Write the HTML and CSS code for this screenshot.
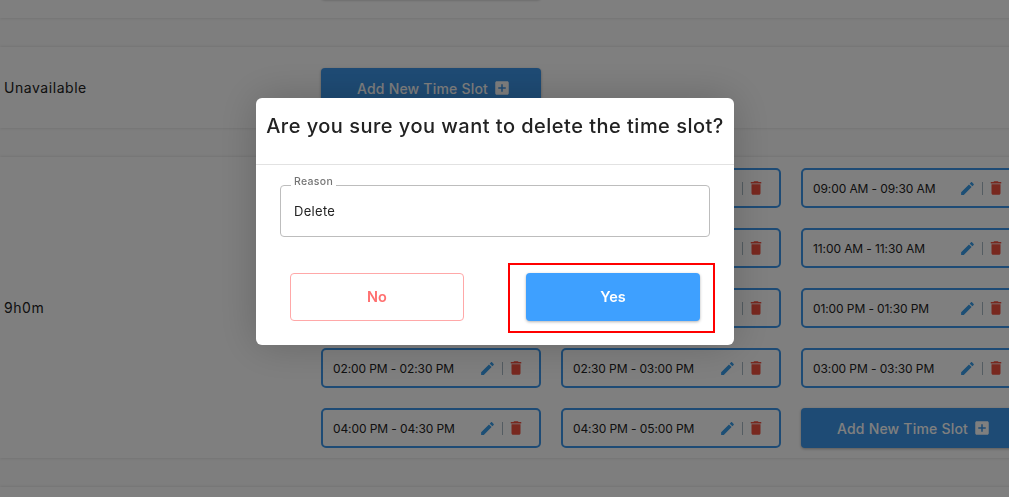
FILE: index.html
```html
<!DOCTYPE html>
<html lang="en">
<head>
  <meta charset="UTF-8" />
  <meta name="viewport" content="width=device-width, initial-scale=1.0"/>
  <title>Time Slots</title>
  <link rel="stylesheet" href="styles.css">
</head>
<body>

  <svg class="sprite" aria-hidden="true">
    <symbol id="icon-edit" viewBox="0 0 24 24"><path d="M3 17.25V21h3.75L17.81 9.94l-3.75-3.75L3 17.25zM20.71 7.04c.39-.39.39-1.02 0-1.41l-2.34-2.34c-.39-.39-1.02-.39-1.41 0l-1.83 1.83 3.75 3.75 1.83-1.83z"/></symbol>
    <symbol id="icon-delete" viewBox="0 0 24 24"><path d="M6 19c0 1.1.9 2 2 2h8c1.1 0 2-.9 2-2V7H6v12zM19 4h-3.5l-1-1h-5l-1 1H5v2h14V4z"/></symbol>
    <symbol id="icon-add" viewBox="0 0 24 24"><path d="M19 3H5c-1.11 0-2 .9-2 2v14c0 1.1.89 2 2 2h14c1.1 0 2-.9 2-2V5c0-1.1-.9-2-2-2zm-2 10h-4v4h-2v-4H7v-2h4V7h2v4h4v2z"/></symbol>
  </svg>

  <div class="schedule">
    <section class="day day-first">
      <div class="day-label"></div>
      <div class="slots">
        <div class="add-slot"></div>
      </div>
    </section>

    <section class="day day-short">
      <div class="day-label">Unavailable</div>
      <div class="slots">
        <button class="add-slot">Add New Time Slot <svg class="icon-add"><use href="#icon-add"/></svg></button>
      </div>
    </section>

    <section class="day day-full">
      <div class="day-label">9h0m</div>
      <div class="slots">
        <div class="slot"><span class="slot-time">08:00 AM - 08:30 AM</span><svg class="icon-edit"><use href="#icon-edit"/></svg><i class="slot-sep"></i><svg class="icon-delete"><use href="#icon-delete"/></svg></div>
        <div class="slot"><span class="slot-time">08:30 AM - 09:00 AM</span><svg class="icon-edit"><use href="#icon-edit"/></svg><i class="slot-sep"></i><svg class="icon-delete"><use href="#icon-delete"/></svg></div>
        <div class="slot"><span class="slot-time">09:00 AM - 09:30 AM</span><svg class="icon-edit"><use href="#icon-edit"/></svg><i class="slot-sep"></i><svg class="icon-delete"><use href="#icon-delete"/></svg></div>
        <div class="slot"><span class="slot-time">10:00 AM - 10:30 AM</span><svg class="icon-edit"><use href="#icon-edit"/></svg><i class="slot-sep"></i><svg class="icon-delete"><use href="#icon-delete"/></svg></div>
        <div class="slot"><span class="slot-time">10:30 AM - 11:00 AM</span><svg class="icon-edit"><use href="#icon-edit"/></svg><i class="slot-sep"></i><svg class="icon-delete"><use href="#icon-delete"/></svg></div>
        <div class="slot"><span class="slot-time">11:00 AM - 11:30 AM</span><svg class="icon-edit"><use href="#icon-edit"/></svg><i class="slot-sep"></i><svg class="icon-delete"><use href="#icon-delete"/></svg></div>
        <div class="slot"><span class="slot-time">12:00 PM - 12:30 PM</span><svg class="icon-edit"><use href="#icon-edit"/></svg><i class="slot-sep"></i><svg class="icon-delete"><use href="#icon-delete"/></svg></div>
        <div class="slot"><span class="slot-time">12:30 PM - 01:00 PM</span><svg class="icon-edit"><use href="#icon-edit"/></svg><i class="slot-sep"></i><svg class="icon-delete"><use href="#icon-delete"/></svg></div>
        <div class="slot"><span class="slot-time">01:00 PM - 01:30 PM</span><svg class="icon-edit"><use href="#icon-edit"/></svg><i class="slot-sep"></i><svg class="icon-delete"><use href="#icon-delete"/></svg></div>
        <div class="slot"><span class="slot-time">02:00 PM - 02:30 PM</span><svg class="icon-edit"><use href="#icon-edit"/></svg><i class="slot-sep"></i><svg class="icon-delete"><use href="#icon-delete"/></svg></div>
        <div class="slot"><span class="slot-time">02:30 PM - 03:00 PM</span><svg class="icon-edit"><use href="#icon-edit"/></svg><i class="slot-sep"></i><svg class="icon-delete"><use href="#icon-delete"/></svg></div>
        <div class="slot"><span class="slot-time">03:00 PM - 03:30 PM</span><svg class="icon-edit"><use href="#icon-edit"/></svg><i class="slot-sep"></i><svg class="icon-delete"><use href="#icon-delete"/></svg></div>
        <div class="slot"><span class="slot-time">04:00 PM - 04:30 PM</span><svg class="icon-edit"><use href="#icon-edit"/></svg><i class="slot-sep"></i><svg class="icon-delete"><use href="#icon-delete"/></svg></div>
        <div class="slot"><span class="slot-time">04:30 PM - 05:00 PM</span><svg class="icon-edit"><use href="#icon-edit"/></svg><i class="slot-sep"></i><svg class="icon-delete"><use href="#icon-delete"/></svg></div>
        <button class="add-slot">Add New Time Slot <svg class="icon-add"><use href="#icon-add"/></svg></button>
      </div>
    </section>

    <section class="day day-last"></section>
  </div>

  <div class="overlay">
    <div class="dialog">
      <h2 class="dialog-title">Are you sure you want to delete the time slot?</h2>
      <div class="dialog-body">
        <fieldset class="reason">
          <legend>Reason</legend>
          <span class="reason-value">Delete</span>
        </fieldset>
        <div class="dialog-actions">
          <button class="btn-no">No</button>
          <div class="action-marked">
            <button class="btn-yes">Yes</button>
            <span class="marker"></span>
          </div>
        </div>
      </div>
    </div>
  </div>

</body>
</html>
```

FILE: styles.css
```css
:root {
  --blue: #3ea0ff;
  --slot-border: #3d97ea;
  --text-color: #222222;
}

html, body {
  height: 100%;
}

body {
  margin: 0;
  overflow: hidden;
  font-family: 'Inter', 'Liberation Sans', sans-serif;
  background-color: #fcfcfc;
  color: var(--text-color);
}

.sprite {
  display: none;
}

.schedule {
  display: flex;
  flex-direction: column;
  gap: 29px;
  width: 1060px;
  margin-top: -41px;
}

.day {
  display: flex;
  align-items: center;
  background: #ffffff;
  box-shadow: 0 0 3px rgba(0, 0, 0, 0.14);
}

.day-first {
  padding-bottom: 19px;
}

.day-short {
  padding: 21px 0 20px;
}

.day-full {
  padding: 11px 0 10px;
}

.day-last {
  height: 60px;
}

.day-label {
  width: 321px;
  padding: 0 0 2px 4px;
  box-sizing: border-box;
  font-size: 14px;
  letter-spacing: 0.55px;
}

.slots {
  display: grid;
  grid-template-columns: repeat(3, 220px);
  gap: 20px;
}

.slot {
  display: flex;
  align-items: center;
  box-sizing: border-box;
  height: 40px;
  padding: 0 14px 0 10px;
  border: 2px solid var(--slot-border);
  border-radius: 5px;
  background: #ffffff;
}

.slot-time {
  flex: 1;
  font-size: 12px;
  letter-spacing: -0.1px;
  white-space: nowrap;
}

.icon-edit {
  width: 17px;
  height: 17px;
  fill: #3a9eea;
}

.slot-sep {
  width: 1px;
  height: 13px;
  margin: 0 4px 0 6px;
  background: #a8b8c4;
}

.icon-delete {
  width: 18px;
  height: 18px;
  fill: #f0503f;
}

.add-slot {
  display: flex;
  align-items: center;
  justify-content: center;
  gap: 5px;
  height: 40px;
  padding: 0 0 0 6px;
  border: none;
  border-radius: 4px;
  background: #3d97ea;
  color: #ffffff;
  font-family: inherit;
  font-size: 14px;
  font-weight: 500;
  letter-spacing: 0.2px;
  box-shadow: 0 1px 3px rgba(0, 0, 0, 0.3);
}

.icon-add {
  width: 18px;
  height: 18px;
  fill: #ffffff;
}

.overlay {
  position: fixed;
  top: 0;
  left: 0;
  width: 100%;
  height: 100%;
  display: flex;
  justify-content: center;
  align-items: flex-start;
  padding-top: 98px;
  padding-right: 19px;
  box-sizing: border-box;
  background: rgba(0, 0, 0, 0.5);
}

.dialog {
  width: 478px;
  background: #ffffff;
  border-radius: 6px;
  box-shadow: 0 0 40px rgba(0, 0, 0, 0.2);
}

.dialog-title {
  margin: 0;
  height: 67px;
  padding-top: 15px;
  box-sizing: border-box;
  border-bottom: 1px solid #e2e2e2;
  text-align: center;
  font-size: 20px;
  font-weight: 500;
  line-height: 27px;
  letter-spacing: 0.48px;
  color: #222222;
  white-space: nowrap;
}

.dialog-body {
  padding: 11px 24px 24px;
}

.reason {
  margin: 0;
  padding: 0 13px 8px;
  height: 61px;
  box-sizing: border-box;
  display: flex;
  align-items: center;
  border: 1px solid #bdbdbd;
  border-radius: 4px;
}

.reason legend {
  padding: 0 3px 6px;
  margin-left: -3px;
  font-size: 10.5px;
  font-weight: 500;
  line-height: 12px;
  letter-spacing: 0.3px;
  color: #757575;
}

.reason-value {
  font-size: 13px;
  letter-spacing: 0.3px;
}

.dialog-actions {
  display: flex;
  justify-content: space-between;
  margin-top: 36px;
  padding: 0 10px;
}

.action-marked {
  position: relative;
  display: flex;
}

/* red annotation box drawn around the button */
.marker {
  position: absolute;
  top: -10px;
  left: -18px;
  right: -15px;
  bottom: -12px;
  border: 2px solid #ff0000;
}

.btn-no,
.btn-yes {
  display: block;
  width: 174px;
  height: 48px;
  padding: 0 0 2px;
  border-radius: 4px;
  font-family: inherit;
  font-size: 14.5px;
  font-weight: 600;
}

.btn-no {
  background: #ffffff;
  border: 1px solid #ffa8a8;
  color: #ff7070;
}

.btn-yes {
  background: var(--blue);
  border: none;
  color: #ffffff;
  box-shadow: 0 1px 3px rgba(0, 0, 0, 0.3);
}
```
